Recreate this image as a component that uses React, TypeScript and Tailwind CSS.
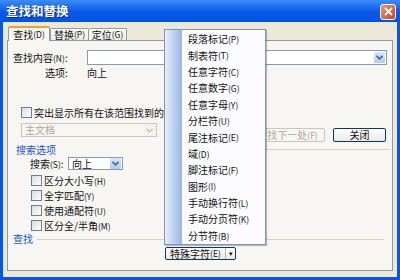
import React from "react";

const font = { fontFamily: '"Noto Sans CJK SC", "Noto Sans", sans-serif' };

// shrink the "(X)" accelerator part, it is drawn smaller than the CJK text
function T({ s }: { s: string }) {
  const parts = s.split(/(\([^)]*\))/);
  return (
    <>
      {parts.map((p, i) =>
        p.startsWith("(") ? (
          <span key={i} className="text-[8.5px]">
            {p}
          </span>
        ) : (
          <span key={i}>{p}</span>
        )
      )}
    </>
  );
}

function Chevron({ disabled }: { disabled?: boolean }) {
  return (
    <svg width="7" height="5" viewBox="0 0 7 5">
      <path d="M0.5 0.8 L3.5 3.8 L6.5 0.8" fill="none" stroke={disabled ? "#c9c7ba" : "#4d6185"} strokeWidth="1.6" />
    </svg>
  );
}

function ArrowBox({ disabled }: { disabled?: boolean }) {
  return (
    <div
      className={
        "flex h-full w-[11px] items-center justify-center rounded-[1px] " +
        (disabled ? "bg-[#f3f2ec]" : "bg-gradient-to-b from-[#dbe6fd] to-[#b3c9f5]")
      }
    >
      <Chevron disabled={disabled} />
    </div>
  );
}

function Checkbox({ label }: { label: string }) {
  return (
    <div className="flex items-center gap-[2px]">
      <div className="h-[11px] w-[11px] border border-[#6b7d98] bg-gradient-to-br from-[#dcdcd6] to-white" />
      <span>
        <T s={label} />
      </span>
    </div>
  );
}

const menuItems = [
  "段落标记(P)",
  "制表符(T)",
  "任意字符(C)",
  "任意数字(G)",
  "任意字母(Y)",
  "分栏符(U)",
  "尾注标记(E)",
  "域(D)",
  "脚注标记(F)",
  "图形(I)",
  "手动换行符(L)",
  "手动分页符(K)",
  "分节符(B)",
];

export default function App() {
  return (
    <div style={font} className="relative flex h-[280px] w-[400px] flex-col overflow-hidden bg-[#0a55e4] text-[10px] leading-none text-[#111]">
      {/* title bar */}
      <div className="flex h-[22px] items-center justify-between bg-gradient-to-b from-[#3c8df7] via-[#0a5ae9] to-[#0052e0] pl-[6px] pr-[4px]">
        <span className="text-[12.5px] font-bold text-white [text-shadow:1px_1px_0_#0a2a8a]">查找和替换</span>
        <div className="mt-[1px] flex h-[16px] w-[16px] items-center justify-center rounded-[3px] border border-white bg-gradient-to-br from-[#e9927a] to-[#c8421f]">
          <svg width="9" height="9" viewBox="0 0 9 9">
            <path d="M1 1 L8 8 M8 1 L1 8" stroke="white" strokeWidth="1.8" />
          </svg>
        </div>
      </div>

      {/* body */}
      <div className="mx-[3px] h-[255px] bg-[#ece9d8]">
        {/* tabs */}
        <div className="flex h-[18px] items-end pl-[5px] pt-[4px]">
          <div className="relative z-10 -mb-px flex h-[15px] w-[42px] items-center justify-center rounded-t-[2px] border-x border-t-[2px] border-x-[#919b9c] border-t-[#f0a030] bg-[#f8f7f3]">
            <T s="查找(D)" />
          </div>
          <div className="flex h-[12px] w-[39px] items-center justify-center rounded-t-[2px] border-x border-t border-[#919b9c] bg-gradient-to-b from-white to-[#ecebe5]">
            <T s="替换(P)" />
          </div>
          <div className="flex h-[12px] w-[38px] items-center justify-center rounded-t-[2px] border-r border-t border-[#919b9c] bg-gradient-to-b from-white to-[#ecebe5]">
            <T s="定位(G)" />
          </div>
        </div>

        {/* panel */}
        <div className="ml-[4px] h-[231px] w-[386px] border border-[#919b9c] bg-[#f7f6f2] pl-[5px]">
          <div className="mt-[9px] flex h-[15px] items-center">
            <span className="w-[74px]">
              <T s="查找内容(N):" />
            </span>
            <div className="flex h-[15px] w-[300px] items-center justify-end border border-[#7f9db9] bg-white p-px">
              <ArrowBox />
            </div>
          </div>
          <div className="mt-[2px] flex h-[12px] items-center">
            <span className="w-[74px] pl-[32px]">选项:</span>
            <span>向上</span>
          </div>

          <div className="mt-[28px] flex h-[11px] items-center pl-[8px]">
            <Checkbox label="突出显示所有在该范围找到的项目" />
          </div>

          <div className="mt-[5px] flex h-[19px] items-start pl-[8px]">
            <div className="flex h-[14px] w-[136px] items-center justify-between border border-[#c9c7ba] bg-[#f7f6f2] pl-[3px] pr-px text-[#aca899]">
              <span>主文档</span>
              <ArrowBox disabled />
            </div>
            <div className="ml-[93px] mt-[5px] flex h-[14px] w-[75px] items-center justify-center rounded-[2px] border border-[#c9c7ba] text-[#aca899]">
              <T s="查找下一处(F)" />
            </div>
            <div className="ml-[8px] mt-[5px] flex h-[14px] w-[53px] items-center justify-center rounded-[2px] border border-[#003c74] bg-gradient-to-b from-white to-[#ece9e0]">
              关闭
            </div>
          </div>

          <div className="mt-[2px] flex h-[11px] items-center">
            <span className="pl-[3px] text-[#1a52d8]">搜索选项</span>
            <div className="ml-[190px] h-px w-[144px] bg-[#d5d2c4]" />
          </div>

          <div className="mt-[2px] flex h-[13px] items-center pl-[17px]">
            <span className="w-[38px]">
              <T s="搜索(S):" />
            </span>
            <div className="flex h-[13px] w-[55px] items-center justify-between border border-[#7f9db9] bg-white pl-[3px] pr-px">
              <span>向上</span>
              <ArrowBox />
            </div>
          </div>

          <div className="mt-[3px] flex flex-col pl-[18px]">
            {["区分大小写(H)", "全字匹配(Y)", "使用通配符(U)", "区分全/半角(M)"].map((t) => (
              <div key={t} className="flex h-[15px] items-center">
                <Checkbox label={t} />
              </div>
            ))}
          </div>

          <div className="flex h-[12px] items-center">
            <span className="text-[#1a52d8]">查找</span>
            <div className="ml-[4px] h-px w-[347px] bg-[#d5d2c4]" />
          </div>

          <div className="mt-[2px] pl-[152px]">
            <div className="flex h-[13px] w-[71px] items-stretch rounded-[2px] border border-[#003c74] bg-gradient-to-b from-white to-[#ece9e0]">
              <div className="flex flex-1 items-center justify-center">
                <T s="特殊字符(E)" />
              </div>
              <div className="flex w-[10px] items-center justify-center border-l border-[#b8b5a6] text-[7px]">▾</div>
            </div>
          </div>
        </div>
      </div>

      {/* popup menu */}
      <div className="absolute left-[164px] top-[29px] flex h-[216px] w-[102px] border border-[#8494b8] bg-[#fcfcff] shadow-[1px_1px_1px_rgba(0,0,0,0.25)]">
        <div className="w-[17px] bg-gradient-to-r from-[#e6eefc] to-[#9ab6e6]" />
        <div className="flex flex-col pt-px">
          {menuItems.map((m) => (
            <div key={m} className="flex h-[16.5px] items-center pl-[6px]">
              <T s={m} />
            </div>
          ))}
        </div>
      </div>
    </div>
  );
}
